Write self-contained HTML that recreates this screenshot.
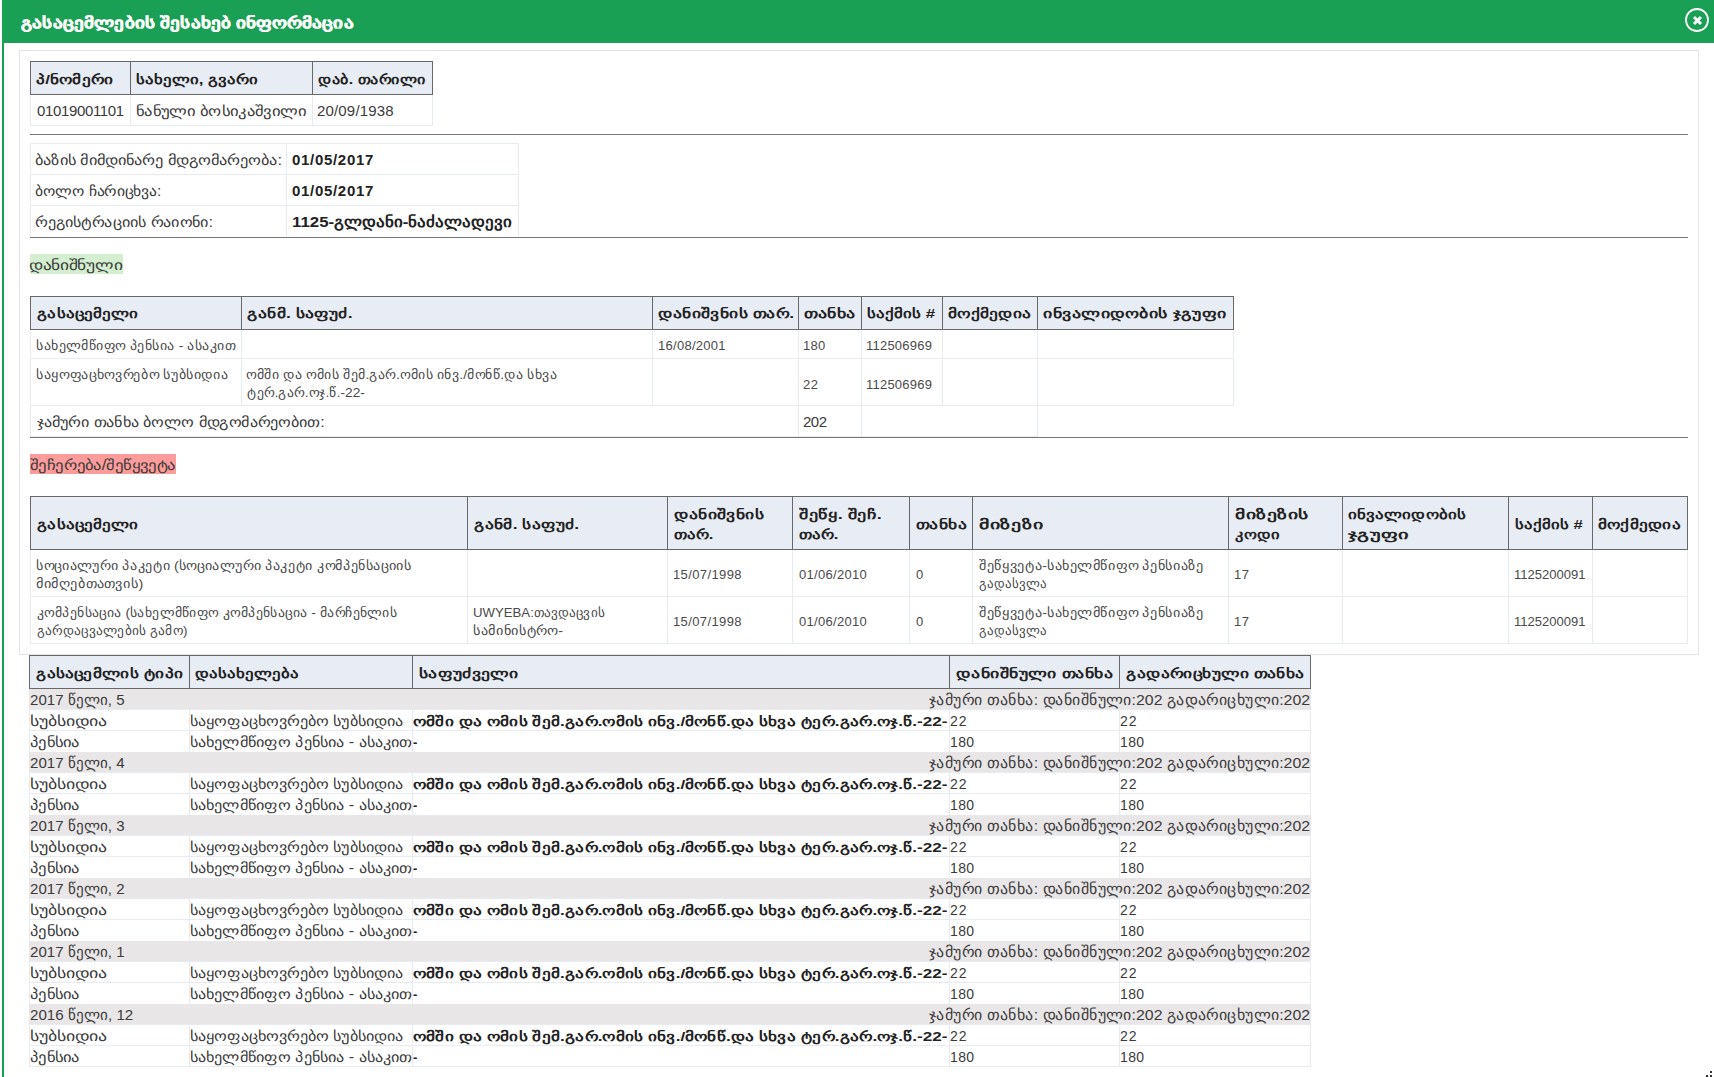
<!DOCTYPE html>
<html><head><meta charset="utf-8"><style>
html,body{margin:0;padding:0;width:1714px;height:1077px;overflow:hidden;background:#fff}
body{position:relative;font-family:"Liberation Sans", sans-serif}
div,span{position:absolute}
span{white-space:nowrap}
</style></head><body>
<div style="left:0px;top:0px;width:1714px;height:1077px;background:#fff"></div><div style="left:2px;top:0px;width:1712px;height:43px;background:#1aa054"></div><div style="left:2px;top:0px;width:2px;height:1077px;background:#1aa054"></div><div style="left:19px;top:50px;width:1680px;height:1px;background:#e4e4e4"></div><div style="left:19px;top:654px;width:1680px;height:1px;background:#e4e4e4"></div><div style="left:19px;top:50px;width:1px;height:605px;background:#e4e4e4"></div><div style="left:1698px;top:50px;width:1px;height:605px;background:#e4e4e4"></div><div style="left:30px;top:61px;width:402px;height:33px;background:#e8ecf5"></div><div style="left:30px;top:94px;width:403px;height:1px;background:#e7ebf2"></div><div style="left:30px;top:125px;width:403px;height:1px;background:#e7ebf2"></div><div style="left:30px;top:94px;width:1px;height:32px;background:#e7ebf2"></div><div style="left:130px;top:94px;width:1px;height:32px;background:#e7ebf2"></div><div style="left:312px;top:94px;width:1px;height:32px;background:#e7ebf2"></div><div style="left:432px;top:94px;width:1px;height:32px;background:#e7ebf2"></div><div style="left:30px;top:61px;width:403px;height:1px;background:#686868"></div><div style="left:30px;top:94px;width:403px;height:1px;background:#686868"></div><div style="left:30px;top:61px;width:1px;height:34px;background:#686868"></div><div style="left:130px;top:61px;width:1px;height:34px;background:#686868"></div><div style="left:312px;top:61px;width:1px;height:34px;background:#686868"></div><div style="left:432px;top:61px;width:1px;height:34px;background:#686868"></div><div style="left:30px;top:134px;width:1658px;height:1px;background:#777"></div><div style="left:30px;top:143px;width:489px;height:1px;background:#e7ebf2"></div><div style="left:30px;top:174px;width:489px;height:1px;background:#e7ebf2"></div><div style="left:30px;top:205px;width:489px;height:1px;background:#e7ebf2"></div><div style="left:30px;top:237px;width:489px;height:1px;background:#e7ebf2"></div><div style="left:30px;top:143px;width:1px;height:95px;background:#e7ebf2"></div><div style="left:286px;top:143px;width:1px;height:95px;background:#e7ebf2"></div><div style="left:518px;top:143px;width:1px;height:95px;background:#e7ebf2"></div><div style="left:30px;top:237px;width:1658px;height:1px;background:#777"></div><div style="left:30px;top:254px;width:93px;height:20px;background:#d3efcf"></div><div style="left:30px;top:296px;width:1203px;height:33px;background:#e8ecf5"></div><div style="left:30px;top:329px;width:1204px;height:1px;background:#e7ebf2"></div><div style="left:30px;top:358px;width:1204px;height:1px;background:#e7ebf2"></div><div style="left:30px;top:405px;width:1204px;height:1px;background:#e7ebf2"></div><div style="left:30px;top:329px;width:1px;height:77px;background:#e7ebf2"></div><div style="left:241px;top:329px;width:1px;height:77px;background:#e7ebf2"></div><div style="left:652px;top:329px;width:1px;height:77px;background:#e7ebf2"></div><div style="left:798px;top:329px;width:1px;height:77px;background:#e7ebf2"></div><div style="left:861px;top:329px;width:1px;height:77px;background:#e7ebf2"></div><div style="left:942px;top:329px;width:1px;height:77px;background:#e7ebf2"></div><div style="left:1037px;top:329px;width:1px;height:77px;background:#e7ebf2"></div><div style="left:1233px;top:329px;width:1px;height:77px;background:#e7ebf2"></div><div style="left:30px;top:296px;width:1204px;height:1px;background:#686868"></div><div style="left:30px;top:329px;width:1204px;height:1px;background:#686868"></div><div style="left:30px;top:296px;width:1px;height:34px;background:#686868"></div><div style="left:241px;top:296px;width:1px;height:34px;background:#686868"></div><div style="left:652px;top:296px;width:1px;height:34px;background:#686868"></div><div style="left:798px;top:296px;width:1px;height:34px;background:#686868"></div><div style="left:861px;top:296px;width:1px;height:34px;background:#686868"></div><div style="left:942px;top:296px;width:1px;height:34px;background:#686868"></div><div style="left:1037px;top:296px;width:1px;height:34px;background:#686868"></div><div style="left:1233px;top:296px;width:1px;height:34px;background:#686868"></div><div style="left:30px;top:405px;width:1px;height:32px;background:#e7ebf2"></div><div style="left:798px;top:405px;width:1px;height:32px;background:#e7ebf2"></div><div style="left:861px;top:405px;width:1px;height:32px;background:#e7ebf2"></div><div style="left:1037px;top:405px;width:1px;height:32px;background:#e7ebf2"></div><div style="left:30px;top:436px;width:1008px;height:1px;background:#e7ebf2"></div><div style="left:30px;top:437px;width:1658px;height:1px;background:#777"></div><div style="left:30px;top:454px;width:146px;height:20px;background:#fe9c9c"></div><div style="left:30px;top:496px;width:1657px;height:53px;background:#e8ecf5"></div><div style="left:30px;top:549px;width:1658px;height:1px;background:#e7ebf2"></div><div style="left:30px;top:596px;width:1658px;height:1px;background:#e7ebf2"></div><div style="left:30px;top:643px;width:1658px;height:1px;background:#e7ebf2"></div><div style="left:30px;top:549px;width:1px;height:95px;background:#e7ebf2"></div><div style="left:467px;top:549px;width:1px;height:95px;background:#e7ebf2"></div><div style="left:667px;top:549px;width:1px;height:95px;background:#e7ebf2"></div><div style="left:792px;top:549px;width:1px;height:95px;background:#e7ebf2"></div><div style="left:909px;top:549px;width:1px;height:95px;background:#e7ebf2"></div><div style="left:972px;top:549px;width:1px;height:95px;background:#e7ebf2"></div><div style="left:1228px;top:549px;width:1px;height:95px;background:#e7ebf2"></div><div style="left:1342px;top:549px;width:1px;height:95px;background:#e7ebf2"></div><div style="left:1508px;top:549px;width:1px;height:95px;background:#e7ebf2"></div><div style="left:1592px;top:549px;width:1px;height:95px;background:#e7ebf2"></div><div style="left:1687px;top:549px;width:1px;height:95px;background:#e7ebf2"></div><div style="left:30px;top:496px;width:1658px;height:1px;background:#686868"></div><div style="left:30px;top:549px;width:1658px;height:1px;background:#686868"></div><div style="left:30px;top:496px;width:1px;height:54px;background:#686868"></div><div style="left:467px;top:496px;width:1px;height:54px;background:#686868"></div><div style="left:667px;top:496px;width:1px;height:54px;background:#686868"></div><div style="left:792px;top:496px;width:1px;height:54px;background:#686868"></div><div style="left:909px;top:496px;width:1px;height:54px;background:#686868"></div><div style="left:972px;top:496px;width:1px;height:54px;background:#686868"></div><div style="left:1228px;top:496px;width:1px;height:54px;background:#686868"></div><div style="left:1342px;top:496px;width:1px;height:54px;background:#686868"></div><div style="left:1508px;top:496px;width:1px;height:54px;background:#686868"></div><div style="left:1592px;top:496px;width:1px;height:54px;background:#686868"></div><div style="left:1687px;top:496px;width:1px;height:54px;background:#686868"></div><div style="left:29px;top:655px;width:1281px;height:33px;background:#e8ecf5"></div><div style="left:29px;top:689px;width:1282px;height:20px;background:#e9e6e7"></div><div style="left:29px;top:752px;width:1282px;height:20px;background:#e9e6e7"></div><div style="left:29px;top:815px;width:1282px;height:20px;background:#e9e6e7"></div><div style="left:29px;top:878px;width:1282px;height:20px;background:#e9e6e7"></div><div style="left:29px;top:941px;width:1282px;height:20px;background:#e9e6e7"></div><div style="left:29px;top:1004px;width:1282px;height:20px;background:#e9e6e7"></div><div style="left:29px;top:709px;width:1282px;height:1px;background:#e7ebf2"></div><div style="left:29px;top:709px;width:1px;height:22px;background:#e7ebf2"></div><div style="left:189px;top:709px;width:1px;height:22px;background:#e7ebf2"></div><div style="left:412px;top:709px;width:1px;height:22px;background:#e7ebf2"></div><div style="left:949px;top:709px;width:1px;height:22px;background:#e7ebf2"></div><div style="left:1119px;top:709px;width:1px;height:22px;background:#e7ebf2"></div><div style="left:1310px;top:709px;width:1px;height:22px;background:#e7ebf2"></div><div style="left:29px;top:730px;width:1282px;height:1px;background:#e7ebf2"></div><div style="left:29px;top:730px;width:1px;height:22px;background:#e7ebf2"></div><div style="left:189px;top:730px;width:1px;height:22px;background:#e7ebf2"></div><div style="left:412px;top:730px;width:1px;height:22px;background:#e7ebf2"></div><div style="left:949px;top:730px;width:1px;height:22px;background:#e7ebf2"></div><div style="left:1119px;top:730px;width:1px;height:22px;background:#e7ebf2"></div><div style="left:1310px;top:730px;width:1px;height:22px;background:#e7ebf2"></div><div style="left:29px;top:772px;width:1282px;height:1px;background:#e7ebf2"></div><div style="left:29px;top:772px;width:1px;height:22px;background:#e7ebf2"></div><div style="left:189px;top:772px;width:1px;height:22px;background:#e7ebf2"></div><div style="left:412px;top:772px;width:1px;height:22px;background:#e7ebf2"></div><div style="left:949px;top:772px;width:1px;height:22px;background:#e7ebf2"></div><div style="left:1119px;top:772px;width:1px;height:22px;background:#e7ebf2"></div><div style="left:1310px;top:772px;width:1px;height:22px;background:#e7ebf2"></div><div style="left:29px;top:793px;width:1282px;height:1px;background:#e7ebf2"></div><div style="left:29px;top:793px;width:1px;height:22px;background:#e7ebf2"></div><div style="left:189px;top:793px;width:1px;height:22px;background:#e7ebf2"></div><div style="left:412px;top:793px;width:1px;height:22px;background:#e7ebf2"></div><div style="left:949px;top:793px;width:1px;height:22px;background:#e7ebf2"></div><div style="left:1119px;top:793px;width:1px;height:22px;background:#e7ebf2"></div><div style="left:1310px;top:793px;width:1px;height:22px;background:#e7ebf2"></div><div style="left:29px;top:835px;width:1282px;height:1px;background:#e7ebf2"></div><div style="left:29px;top:835px;width:1px;height:22px;background:#e7ebf2"></div><div style="left:189px;top:835px;width:1px;height:22px;background:#e7ebf2"></div><div style="left:412px;top:835px;width:1px;height:22px;background:#e7ebf2"></div><div style="left:949px;top:835px;width:1px;height:22px;background:#e7ebf2"></div><div style="left:1119px;top:835px;width:1px;height:22px;background:#e7ebf2"></div><div style="left:1310px;top:835px;width:1px;height:22px;background:#e7ebf2"></div><div style="left:29px;top:856px;width:1282px;height:1px;background:#e7ebf2"></div><div style="left:29px;top:856px;width:1px;height:22px;background:#e7ebf2"></div><div style="left:189px;top:856px;width:1px;height:22px;background:#e7ebf2"></div><div style="left:412px;top:856px;width:1px;height:22px;background:#e7ebf2"></div><div style="left:949px;top:856px;width:1px;height:22px;background:#e7ebf2"></div><div style="left:1119px;top:856px;width:1px;height:22px;background:#e7ebf2"></div><div style="left:1310px;top:856px;width:1px;height:22px;background:#e7ebf2"></div><div style="left:29px;top:898px;width:1282px;height:1px;background:#e7ebf2"></div><div style="left:29px;top:898px;width:1px;height:22px;background:#e7ebf2"></div><div style="left:189px;top:898px;width:1px;height:22px;background:#e7ebf2"></div><div style="left:412px;top:898px;width:1px;height:22px;background:#e7ebf2"></div><div style="left:949px;top:898px;width:1px;height:22px;background:#e7ebf2"></div><div style="left:1119px;top:898px;width:1px;height:22px;background:#e7ebf2"></div><div style="left:1310px;top:898px;width:1px;height:22px;background:#e7ebf2"></div><div style="left:29px;top:919px;width:1282px;height:1px;background:#e7ebf2"></div><div style="left:29px;top:919px;width:1px;height:22px;background:#e7ebf2"></div><div style="left:189px;top:919px;width:1px;height:22px;background:#e7ebf2"></div><div style="left:412px;top:919px;width:1px;height:22px;background:#e7ebf2"></div><div style="left:949px;top:919px;width:1px;height:22px;background:#e7ebf2"></div><div style="left:1119px;top:919px;width:1px;height:22px;background:#e7ebf2"></div><div style="left:1310px;top:919px;width:1px;height:22px;background:#e7ebf2"></div><div style="left:29px;top:961px;width:1282px;height:1px;background:#e7ebf2"></div><div style="left:29px;top:961px;width:1px;height:22px;background:#e7ebf2"></div><div style="left:189px;top:961px;width:1px;height:22px;background:#e7ebf2"></div><div style="left:412px;top:961px;width:1px;height:22px;background:#e7ebf2"></div><div style="left:949px;top:961px;width:1px;height:22px;background:#e7ebf2"></div><div style="left:1119px;top:961px;width:1px;height:22px;background:#e7ebf2"></div><div style="left:1310px;top:961px;width:1px;height:22px;background:#e7ebf2"></div><div style="left:29px;top:982px;width:1282px;height:1px;background:#e7ebf2"></div><div style="left:29px;top:982px;width:1px;height:22px;background:#e7ebf2"></div><div style="left:189px;top:982px;width:1px;height:22px;background:#e7ebf2"></div><div style="left:412px;top:982px;width:1px;height:22px;background:#e7ebf2"></div><div style="left:949px;top:982px;width:1px;height:22px;background:#e7ebf2"></div><div style="left:1119px;top:982px;width:1px;height:22px;background:#e7ebf2"></div><div style="left:1310px;top:982px;width:1px;height:22px;background:#e7ebf2"></div><div style="left:29px;top:1024px;width:1282px;height:1px;background:#e7ebf2"></div><div style="left:29px;top:1024px;width:1px;height:22px;background:#e7ebf2"></div><div style="left:189px;top:1024px;width:1px;height:22px;background:#e7ebf2"></div><div style="left:412px;top:1024px;width:1px;height:22px;background:#e7ebf2"></div><div style="left:949px;top:1024px;width:1px;height:22px;background:#e7ebf2"></div><div style="left:1119px;top:1024px;width:1px;height:22px;background:#e7ebf2"></div><div style="left:1310px;top:1024px;width:1px;height:22px;background:#e7ebf2"></div><div style="left:29px;top:1045px;width:1282px;height:1px;background:#e7ebf2"></div><div style="left:29px;top:1045px;width:1px;height:22px;background:#e7ebf2"></div><div style="left:189px;top:1045px;width:1px;height:22px;background:#e7ebf2"></div><div style="left:412px;top:1045px;width:1px;height:22px;background:#e7ebf2"></div><div style="left:949px;top:1045px;width:1px;height:22px;background:#e7ebf2"></div><div style="left:1119px;top:1045px;width:1px;height:22px;background:#e7ebf2"></div><div style="left:1310px;top:1045px;width:1px;height:22px;background:#e7ebf2"></div><div style="left:29px;top:1066px;width:1282px;height:1px;background:#e7ebf2"></div><div style="left:29px;top:655px;width:1282px;height:1px;background:#686868"></div><div style="left:29px;top:688px;width:1282px;height:1px;background:#686868"></div><div style="left:29px;top:655px;width:1px;height:34px;background:#686868"></div><div style="left:189px;top:655px;width:1px;height:34px;background:#686868"></div><div style="left:412px;top:655px;width:1px;height:34px;background:#686868"></div><div style="left:949px;top:655px;width:1px;height:34px;background:#686868"></div><div style="left:1119px;top:655px;width:1px;height:34px;background:#686868"></div><div style="left:1310px;top:655px;width:1px;height:34px;background:#686868"></div>
<span style="top:14px;font-size:15px;line-height:17px;color:#fff;font-weight:bold;left:21.00px;transform:scaleX(1.2634);transform-origin:0 0;-webkit-text-stroke:0.4px #fff">გასაცემლების შესახებ ინფორმაცია</span><span style="top:72px;font-size:13px;line-height:15px;color:#222;font-weight:bold;left:36.00px;transform:scaleX(1.3153);transform-origin:0 0">პ/ნომერი</span><span style="top:72px;font-size:13px;line-height:15px;color:#222;font-weight:bold;left:136.00px;transform:scaleX(1.2821);transform-origin:0 0">სახელი, გვარი</span><span style="top:72px;font-size:13px;line-height:15px;color:#222;font-weight:bold;left:318.00px;transform:scaleX(1.2333);transform-origin:0 0">დაბ. თარილი</span><span style="top:102px;font-size:15px;line-height:17px;color:#3b3b3b;left:37px;letter-spacing:-0.35px">01019001101</span><span style="top:103px;font-size:14px;line-height:16px;color:#3b3b3b;left:135.81px;transform:scaleX(1.1901);transform-origin:0 0">ნანული ბოსიკაშვილი</span><span style="top:102px;font-size:15px;line-height:17px;color:#3b3b3b;left:317px;letter-spacing:0.17px">20/09/1938</span><span style="top:152px;font-size:14px;line-height:16px;color:#3b3b3b;left:34.83px;transform:scaleX(1.1676);transform-origin:0 0">ბაზის მიმდინარე მდგომარეობა:</span><span style="top:183px;font-size:14px;line-height:16px;color:#3b3b3b;left:34.88px;transform:scaleX(1.1207);transform-origin:0 0">ბოლო ჩარიცხვა:</span><span style="top:214px;font-size:14px;line-height:16px;color:#3b3b3b;left:34.84px;transform:scaleX(1.1572);transform-origin:0 0">რეგისტრაციის რაიონი:</span><span style="top:151px;font-size:15px;line-height:17px;color:#222;font-weight:bold;left:292px;letter-spacing:0.69px">01/05/2017</span><span style="top:182px;font-size:15px;line-height:17px;color:#222;font-weight:bold;left:292px;letter-spacing:0.69px">01/05/2017</span><span style="top:213px;font-size:15px;line-height:17px;color:#222;font-weight:bold;left:291.88px;transform:scaleX(1.1241);transform-origin:0 0">1125-გლდანი-ნაძალადევი</span><span style="top:257px;font-size:14px;line-height:16px;color:#3b3b3b;left:28.76px;transform:scaleX(1.2432);transform-origin:0 0">დანიშნული</span><span style="top:306px;font-size:13px;line-height:15px;color:#222;font-weight:bold;left:36.50px;transform:scaleX(1.3000);transform-origin:0 0">გასაცემელი</span><span style="top:306px;font-size:13px;line-height:15px;color:#222;font-weight:bold;left:247.00px;transform:scaleX(1.3410);transform-origin:0 0">განმ. საფუძ.</span><span style="top:306px;font-size:13px;line-height:15px;color:#222;font-weight:bold;left:658.00px;transform:scaleX(1.3450);transform-origin:0 0">დანიშვნის თარ.</span><span style="top:306px;font-size:13px;line-height:15px;color:#222;font-weight:bold;left:804.00px;transform:scaleX(1.3676);transform-origin:0 0">თანხა</span><span style="top:306px;font-size:13px;line-height:15px;color:#222;font-weight:bold;left:867.00px;transform:scaleX(1.2906);transform-origin:0 0">საქმის #</span><span style="top:306px;font-size:13px;line-height:15px;color:#222;font-weight:bold;left:948.00px;transform:scaleX(1.3258);transform-origin:0 0">მოქმედია</span><span style="top:306px;font-size:13px;line-height:15px;color:#222;font-weight:bold;left:1043.00px;transform:scaleX(1.3731);transform-origin:0 0">ინვალიდობის ჯგუფი</span><span style="top:338px;font-size:13px;line-height:15px;color:#4a4a4a;left:35.93px;transform:scaleX(1.0724);transform-origin:0 0">სახელმწიფო პენსია - ასაკით</span><span style="top:338px;font-size:13px;line-height:15px;color:#4a4a4a;left:658px;letter-spacing:0.28px">16/08/2001</span><span style="top:338px;font-size:13px;line-height:15px;color:#4a4a4a;left:803px;letter-spacing:0.30px">180</span><span style="top:338px;font-size:13px;line-height:15px;color:#4a4a4a;left:866px;letter-spacing:0.22px">112506969</span><span style="top:367px;font-size:13px;line-height:15px;color:#4a4a4a;left:35.92px;transform:scaleX(1.0830);transform-origin:0 0">საყოფაცხოვრებო სუბსიდია</span><span style="top:367px;font-size:13px;line-height:15px;color:#4a4a4a;left:245.93px;transform:scaleX(1.0685);transform-origin:0 0">ომში და ომის შემ.გარ.ომის ინვ./მონწ.და სხვა</span><span style="top:385px;font-size:13px;line-height:15px;color:#4a4a4a;left:247.00px;transform:scaleX(1.0568);transform-origin:0 0">ტერ.გარ.ოჯ.წ.-22-</span><span style="top:377px;font-size:13px;line-height:15px;color:#4a4a4a;left:803px;letter-spacing:0.60px">22</span><span style="top:377px;font-size:13px;line-height:15px;color:#4a4a4a;left:866px;letter-spacing:0.22px">112506969</span><span style="top:414px;font-size:14px;line-height:16px;color:#3b3b3b;left:37.00px;transform:scaleX(1.1573);transform-origin:0 0">ჯამური თანხა ბოლო მდგომარეობით:</span><span style="top:413px;font-size:15px;line-height:17px;color:#3b3b3b;left:803px;letter-spacing:-0.50px">202</span><span style="top:457px;font-size:14px;line-height:16px;color:#3b3b3b;left:30.00px;transform:scaleX(1.1967);transform-origin:0 0">შეჩერება/შეწყვეტა</span><span style="top:517px;font-size:13px;line-height:15px;color:#222;font-weight:bold;left:36.50px;transform:scaleX(1.3000);transform-origin:0 0">გასაცემელი</span><span style="top:517px;font-size:13px;line-height:15px;color:#222;font-weight:bold;left:474.00px;transform:scaleX(1.3333);transform-origin:0 0">განმ. საფუძ.</span><span style="top:507px;font-size:13px;line-height:15px;color:#222;font-weight:bold;left:674.00px;transform:scaleX(1.3448);transform-origin:0 0">დანიშვნის</span><span style="top:527px;font-size:13px;line-height:15px;color:#222;font-weight:bold;left:674.00px;transform:scaleX(1.2833);transform-origin:0 0">თარ.</span><span style="top:507px;font-size:13px;line-height:15px;color:#222;font-weight:bold;left:799.00px;transform:scaleX(1.3847);transform-origin:0 0">შეწყ. შეჩ.</span><span style="top:527px;font-size:13px;line-height:15px;color:#222;font-weight:bold;left:799.00px;transform:scaleX(1.2833);transform-origin:0 0">თარ.</span><span style="top:517px;font-size:13px;line-height:15px;color:#222;font-weight:bold;left:916.00px;transform:scaleX(1.3405);transform-origin:0 0">თანხა</span><span style="top:517px;font-size:13px;line-height:15px;color:#222;font-weight:bold;left:979.00px;transform:scaleX(1.5286);transform-origin:0 0">მიზეზი</span><span style="top:507px;font-size:13px;line-height:15px;color:#222;font-weight:bold;left:1235.00px;transform:scaleX(1.5000);transform-origin:0 0">მიზეზის</span><span style="top:527px;font-size:13px;line-height:15px;color:#222;font-weight:bold;left:1235.00px;transform:scaleX(1.2686);transform-origin:0 0">კოდი</span><span style="top:507px;font-size:13px;line-height:15px;color:#222;font-weight:bold;left:1348.00px;transform:scaleX(1.2945);transform-origin:0 0">ინვალიდობის</span><span style="top:527px;font-size:13px;line-height:15px;color:#222;font-weight:bold;left:1348.00px;transform:scaleX(1.5641);transform-origin:0 0">ჯგუფი</span><span style="top:517px;font-size:13px;line-height:15px;color:#222;font-weight:bold;left:1515.00px;transform:scaleX(1.2811);transform-origin:0 0">საქმის #</span><span style="top:517px;font-size:13px;line-height:15px;color:#222;font-weight:bold;left:1598.00px;transform:scaleX(1.3161);transform-origin:0 0">მოქმედია</span><span style="top:558px;font-size:13px;line-height:15px;color:#4a4a4a;left:35.91px;transform:scaleX(1.0855);transform-origin:0 0">სოციალური პაკეტი (სოციალური პაკეტი კომპენსაციის</span><span style="top:576px;font-size:13px;line-height:15px;color:#4a4a4a;left:35.90px;transform:scaleX(1.1010);transform-origin:0 0">მიმღებთათვის)</span><span style="top:567px;font-size:13px;line-height:15px;color:#4a4a4a;left:673px;letter-spacing:0.39px">15/07/1998</span><span style="top:567px;font-size:13px;line-height:15px;color:#4a4a4a;left:799px;letter-spacing:0.31px">01/06/2010</span><span style="top:567px;font-size:13px;line-height:15px;color:#4a4a4a;left:916px">0</span><span style="top:558px;font-size:13px;line-height:15px;color:#4a4a4a;left:979.00px;transform:scaleX(1.0898);transform-origin:0 0">შეწყვეტა-სახელმწიფო პენსიაზე</span><span style="top:576px;font-size:13px;line-height:15px;color:#4a4a4a;left:979.00px;transform:scaleX(1.0000);transform-origin:0 0">გადასვლა</span><span style="top:567px;font-size:13px;line-height:15px;color:#4a4a4a;left:1234px;letter-spacing:0.40px">17</span><span style="top:567px;font-size:13px;line-height:15px;color:#4a4a4a;left:1514px;letter-spacing:0.01px">1125200091</span><span style="top:605px;font-size:13px;line-height:15px;color:#4a4a4a;left:37.00px;transform:scaleX(1.0584);transform-origin:0 0">კომპენსაცია (სახელმწიფო კომპენსაცია - მარჩენლის</span><span style="top:623px;font-size:13px;line-height:15px;color:#4a4a4a;left:37.00px;transform:scaleX(1.0303);transform-origin:0 0">გარდაცვალების გამო)</span><span style="top:614px;font-size:13px;line-height:15px;color:#4a4a4a;left:673px;letter-spacing:0.39px">15/07/1998</span><span style="top:614px;font-size:13px;line-height:15px;color:#4a4a4a;left:799px;letter-spacing:0.31px">01/06/2010</span><span style="top:614px;font-size:13px;line-height:15px;color:#4a4a4a;left:916px">0</span><span style="top:605px;font-size:13px;line-height:15px;color:#4a4a4a;left:979.00px;transform:scaleX(1.0898);transform-origin:0 0">შეწყვეტა-სახელმწიფო პენსიაზე</span><span style="top:623px;font-size:13px;line-height:15px;color:#4a4a4a;left:979.00px;transform:scaleX(1.0000);transform-origin:0 0">გადასვლა</span><span style="top:614px;font-size:13px;line-height:15px;color:#4a4a4a;left:1234px;letter-spacing:0.40px">17</span><span style="top:614px;font-size:13px;line-height:15px;color:#4a4a4a;left:1514px;letter-spacing:0.01px">1125200091</span><span style="top:605px;font-size:13px;line-height:15px;color:#4a4a4a;left:472.99px;transform:scaleX(1.0141);transform-origin:0 0">UWYEBA:თავდაცვის</span><span style="top:623px;font-size:13px;line-height:15px;color:#4a4a4a;left:472.91px;transform:scaleX(1.0938);transform-origin:0 0">სამინისტრო-</span><span style="top:666px;font-size:13px;line-height:15px;color:#222;font-weight:bold;left:36.00px;transform:scaleX(1.3187);transform-origin:0 0">გასაცემლის ტიპი</span><span style="top:666px;font-size:13px;line-height:15px;color:#222;font-weight:bold;left:195.00px;transform:scaleX(1.2887);transform-origin:0 0">დასახელება</span><span style="top:666px;font-size:13px;line-height:15px;color:#222;font-weight:bold;left:419.00px;transform:scaleX(1.3473);transform-origin:0 0">საფუძველი</span><span style="top:666px;font-size:13px;line-height:15px;color:#222;font-weight:bold;left:956.00px;transform:scaleX(1.3626);transform-origin:0 0">დანიშნული თანხა</span><span style="top:666px;font-size:13px;line-height:15px;color:#222;font-weight:bold;left:1126.00px;transform:scaleX(1.3361);transform-origin:0 0">გადარიცხული თანხა</span><span style="top:691px;font-size:15px;line-height:17px;color:#3b3b3b;left:30.00px;transform:scaleX(1.0043);transform-origin:0 0">2017 წელი, 5</span><span style="top:691px;font-size:15px;line-height:17px;color:#3b3b3b;right:404px;transform:scaleX(1.0589);transform-origin:100% 0">ჯამური თანხა: დანიშნული:202 გადარიცხული:202</span><span style="top:713px;font-size:14px;line-height:16px;color:#3b3b3b;left:29.72px;transform:scaleX(1.2780);transform-origin:0 0">სუბსიდია</span><span style="top:713px;font-size:14px;line-height:16px;color:#3b3b3b;left:189.84px;transform:scaleX(1.1568);transform-origin:0 0">საყოფაცხოვრებო სუბსიდია</span><span style="top:714px;font-size:13px;line-height:15px;color:#222;font-weight:bold;left:413.00px;transform:scaleX(1.3153);transform-origin:0 0">ომში და ომის შემ.გარ.ომის ინვ./მონწ.და სხვა ტერ.გარ.ოჯ.წ.-22-</span><span style="top:713px;font-size:14px;line-height:16px;color:#3b3b3b;left:950px;letter-spacing:1.00px">22</span><span style="top:713px;font-size:14px;line-height:16px;color:#3b3b3b;left:1120px;letter-spacing:1.00px">22</span><span style="top:734px;font-size:14px;line-height:16px;color:#3b3b3b;left:29.81px;transform:scaleX(1.1854);transform-origin:0 0">პენსია</span><span style="top:734px;font-size:14px;line-height:16px;color:#3b3b3b;left:189.84px;transform:scaleX(1.1605);transform-origin:0 0">სახელმწიფო პენსია - ასაკით</span><span style="top:735px;font-size:13px;line-height:15px;color:#222;font-weight:bold;left:413px">-</span><span style="top:734px;font-size:14px;line-height:16px;color:#3b3b3b;left:950px;letter-spacing:0.40px">180</span><span style="top:734px;font-size:14px;line-height:16px;color:#3b3b3b;left:1120px;letter-spacing:0.40px">180</span><span style="top:754px;font-size:15px;line-height:17px;color:#3b3b3b;left:30.00px;transform:scaleX(1.0043);transform-origin:0 0">2017 წელი, 4</span><span style="top:754px;font-size:15px;line-height:17px;color:#3b3b3b;right:404px;transform:scaleX(1.0589);transform-origin:100% 0">ჯამური თანხა: დანიშნული:202 გადარიცხული:202</span><span style="top:776px;font-size:14px;line-height:16px;color:#3b3b3b;left:29.72px;transform:scaleX(1.2780);transform-origin:0 0">სუბსიდია</span><span style="top:776px;font-size:14px;line-height:16px;color:#3b3b3b;left:189.84px;transform:scaleX(1.1568);transform-origin:0 0">საყოფაცხოვრებო სუბსიდია</span><span style="top:777px;font-size:13px;line-height:15px;color:#222;font-weight:bold;left:413.00px;transform:scaleX(1.3153);transform-origin:0 0">ომში და ომის შემ.გარ.ომის ინვ./მონწ.და სხვა ტერ.გარ.ოჯ.წ.-22-</span><span style="top:776px;font-size:14px;line-height:16px;color:#3b3b3b;left:950px;letter-spacing:1.00px">22</span><span style="top:776px;font-size:14px;line-height:16px;color:#3b3b3b;left:1120px;letter-spacing:1.00px">22</span><span style="top:797px;font-size:14px;line-height:16px;color:#3b3b3b;left:29.81px;transform:scaleX(1.1854);transform-origin:0 0">პენსია</span><span style="top:797px;font-size:14px;line-height:16px;color:#3b3b3b;left:189.84px;transform:scaleX(1.1605);transform-origin:0 0">სახელმწიფო პენსია - ასაკით</span><span style="top:798px;font-size:13px;line-height:15px;color:#222;font-weight:bold;left:413px">-</span><span style="top:797px;font-size:14px;line-height:16px;color:#3b3b3b;left:950px;letter-spacing:0.40px">180</span><span style="top:797px;font-size:14px;line-height:16px;color:#3b3b3b;left:1120px;letter-spacing:0.40px">180</span><span style="top:817px;font-size:15px;line-height:17px;color:#3b3b3b;left:30.00px;transform:scaleX(1.0043);transform-origin:0 0">2017 წელი, 3</span><span style="top:817px;font-size:15px;line-height:17px;color:#3b3b3b;right:404px;transform:scaleX(1.0589);transform-origin:100% 0">ჯამური თანხა: დანიშნული:202 გადარიცხული:202</span><span style="top:839px;font-size:14px;line-height:16px;color:#3b3b3b;left:29.72px;transform:scaleX(1.2780);transform-origin:0 0">სუბსიდია</span><span style="top:839px;font-size:14px;line-height:16px;color:#3b3b3b;left:189.84px;transform:scaleX(1.1568);transform-origin:0 0">საყოფაცხოვრებო სუბსიდია</span><span style="top:840px;font-size:13px;line-height:15px;color:#222;font-weight:bold;left:413.00px;transform:scaleX(1.3153);transform-origin:0 0">ომში და ომის შემ.გარ.ომის ინვ./მონწ.და სხვა ტერ.გარ.ოჯ.წ.-22-</span><span style="top:839px;font-size:14px;line-height:16px;color:#3b3b3b;left:950px;letter-spacing:1.00px">22</span><span style="top:839px;font-size:14px;line-height:16px;color:#3b3b3b;left:1120px;letter-spacing:1.00px">22</span><span style="top:860px;font-size:14px;line-height:16px;color:#3b3b3b;left:29.81px;transform:scaleX(1.1854);transform-origin:0 0">პენსია</span><span style="top:860px;font-size:14px;line-height:16px;color:#3b3b3b;left:189.84px;transform:scaleX(1.1605);transform-origin:0 0">სახელმწიფო პენსია - ასაკით</span><span style="top:861px;font-size:13px;line-height:15px;color:#222;font-weight:bold;left:413px">-</span><span style="top:860px;font-size:14px;line-height:16px;color:#3b3b3b;left:950px;letter-spacing:0.40px">180</span><span style="top:860px;font-size:14px;line-height:16px;color:#3b3b3b;left:1120px;letter-spacing:0.40px">180</span><span style="top:880px;font-size:15px;line-height:17px;color:#3b3b3b;left:30.00px;transform:scaleX(1.0043);transform-origin:0 0">2017 წელი, 2</span><span style="top:880px;font-size:15px;line-height:17px;color:#3b3b3b;right:404px;transform:scaleX(1.0589);transform-origin:100% 0">ჯამური თანხა: დანიშნული:202 გადარიცხული:202</span><span style="top:902px;font-size:14px;line-height:16px;color:#3b3b3b;left:29.72px;transform:scaleX(1.2780);transform-origin:0 0">სუბსიდია</span><span style="top:902px;font-size:14px;line-height:16px;color:#3b3b3b;left:189.84px;transform:scaleX(1.1568);transform-origin:0 0">საყოფაცხოვრებო სუბსიდია</span><span style="top:903px;font-size:13px;line-height:15px;color:#222;font-weight:bold;left:413.00px;transform:scaleX(1.3153);transform-origin:0 0">ომში და ომის შემ.გარ.ომის ინვ./მონწ.და სხვა ტერ.გარ.ოჯ.წ.-22-</span><span style="top:902px;font-size:14px;line-height:16px;color:#3b3b3b;left:950px;letter-spacing:1.00px">22</span><span style="top:902px;font-size:14px;line-height:16px;color:#3b3b3b;left:1120px;letter-spacing:1.00px">22</span><span style="top:923px;font-size:14px;line-height:16px;color:#3b3b3b;left:29.81px;transform:scaleX(1.1854);transform-origin:0 0">პენსია</span><span style="top:923px;font-size:14px;line-height:16px;color:#3b3b3b;left:189.84px;transform:scaleX(1.1605);transform-origin:0 0">სახელმწიფო პენსია - ასაკით</span><span style="top:924px;font-size:13px;line-height:15px;color:#222;font-weight:bold;left:413px">-</span><span style="top:923px;font-size:14px;line-height:16px;color:#3b3b3b;left:950px;letter-spacing:0.40px">180</span><span style="top:923px;font-size:14px;line-height:16px;color:#3b3b3b;left:1120px;letter-spacing:0.40px">180</span><span style="top:943px;font-size:15px;line-height:17px;color:#3b3b3b;left:30.00px;transform:scaleX(1.0043);transform-origin:0 0">2017 წელი, 1</span><span style="top:943px;font-size:15px;line-height:17px;color:#3b3b3b;right:404px;transform:scaleX(1.0589);transform-origin:100% 0">ჯამური თანხა: დანიშნული:202 გადარიცხული:202</span><span style="top:965px;font-size:14px;line-height:16px;color:#3b3b3b;left:29.72px;transform:scaleX(1.2780);transform-origin:0 0">სუბსიდია</span><span style="top:965px;font-size:14px;line-height:16px;color:#3b3b3b;left:189.84px;transform:scaleX(1.1568);transform-origin:0 0">საყოფაცხოვრებო სუბსიდია</span><span style="top:966px;font-size:13px;line-height:15px;color:#222;font-weight:bold;left:413.00px;transform:scaleX(1.3153);transform-origin:0 0">ომში და ომის შემ.გარ.ომის ინვ./მონწ.და სხვა ტერ.გარ.ოჯ.წ.-22-</span><span style="top:965px;font-size:14px;line-height:16px;color:#3b3b3b;left:950px;letter-spacing:1.00px">22</span><span style="top:965px;font-size:14px;line-height:16px;color:#3b3b3b;left:1120px;letter-spacing:1.00px">22</span><span style="top:986px;font-size:14px;line-height:16px;color:#3b3b3b;left:29.81px;transform:scaleX(1.1854);transform-origin:0 0">პენსია</span><span style="top:986px;font-size:14px;line-height:16px;color:#3b3b3b;left:189.84px;transform:scaleX(1.1605);transform-origin:0 0">სახელმწიფო პენსია - ასაკით</span><span style="top:987px;font-size:13px;line-height:15px;color:#222;font-weight:bold;left:413px">-</span><span style="top:986px;font-size:14px;line-height:16px;color:#3b3b3b;left:950px;letter-spacing:0.40px">180</span><span style="top:986px;font-size:14px;line-height:16px;color:#3b3b3b;left:1120px;letter-spacing:0.40px">180</span><span style="top:1006px;font-size:15px;line-height:17px;color:#3b3b3b;left:29.99px;transform:scaleX(1.0069);transform-origin:0 0">2016 წელი, 12</span><span style="top:1006px;font-size:15px;line-height:17px;color:#3b3b3b;right:404px;transform:scaleX(1.0589);transform-origin:100% 0">ჯამური თანხა: დანიშნული:202 გადარიცხული:202</span><span style="top:1028px;font-size:14px;line-height:16px;color:#3b3b3b;left:29.72px;transform:scaleX(1.2780);transform-origin:0 0">სუბსიდია</span><span style="top:1028px;font-size:14px;line-height:16px;color:#3b3b3b;left:189.84px;transform:scaleX(1.1568);transform-origin:0 0">საყოფაცხოვრებო სუბსიდია</span><span style="top:1029px;font-size:13px;line-height:15px;color:#222;font-weight:bold;left:413.00px;transform:scaleX(1.3153);transform-origin:0 0">ომში და ომის შემ.გარ.ომის ინვ./მონწ.და სხვა ტერ.გარ.ოჯ.წ.-22-</span><span style="top:1028px;font-size:14px;line-height:16px;color:#3b3b3b;left:950px;letter-spacing:1.00px">22</span><span style="top:1028px;font-size:14px;line-height:16px;color:#3b3b3b;left:1120px;letter-spacing:1.00px">22</span><span style="top:1049px;font-size:14px;line-height:16px;color:#3b3b3b;left:29.81px;transform:scaleX(1.1854);transform-origin:0 0">პენსია</span><span style="top:1049px;font-size:14px;line-height:16px;color:#3b3b3b;left:189.84px;transform:scaleX(1.1605);transform-origin:0 0">სახელმწიფო პენსია - ასაკით</span><span style="top:1050px;font-size:13px;line-height:15px;color:#222;font-weight:bold;left:413px">-</span><span style="top:1049px;font-size:14px;line-height:16px;color:#3b3b3b;left:950px;letter-spacing:0.40px">180</span><span style="top:1049px;font-size:14px;line-height:16px;color:#3b3b3b;left:1120px;letter-spacing:0.40px">180</span>
<svg style="position:absolute;left:1684px;top:7px" width="26" height="26" viewBox="0 0 26 26"><circle cx="13" cy="13" r="11" fill="none" stroke="#fff" stroke-width="1.8"/><path d="M10 10 L17 17 M17 10 L10 17" stroke="#fff" stroke-width="3" stroke-linecap="butt"/></svg>
<div style="left:1710px;top:1071px;width:2px;height:2px;background:#333"></div><div style="left:1706px;top:1075px;width:2px;height:2px;background:#333"></div><div style="left:1710px;top:1075px;width:2px;height:2px;background:#333"></div>
</body></html>
